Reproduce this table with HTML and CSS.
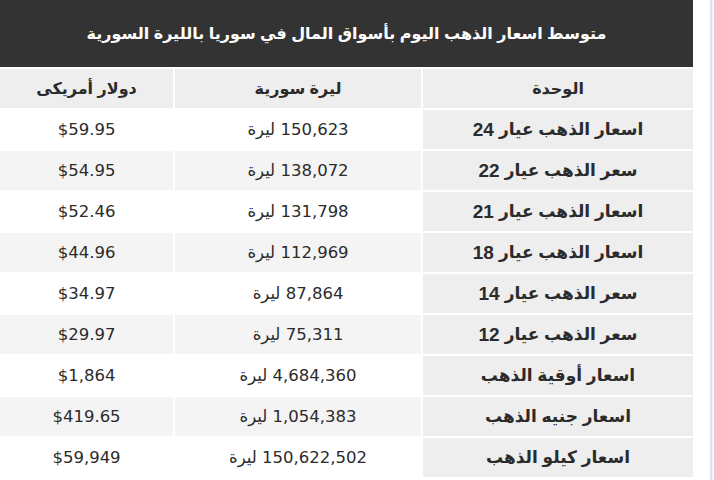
FILE: index.html
```html
<!DOCTYPE html>
<html lang="ar" dir="rtl">
<head>
<meta charset="utf-8">
<title>أسعار الذهب في سوريا</title>
<link rel="stylesheet" href="styles.css">
</head>
<body>
<div class="page">
  <div class="edge"></div>
  <div class="main">
    <div class="title">متوسط اسعار الذهب اليوم بأسواق المال في سوريا بالليرة السورية</div>
    <div class="grid">
      <div class="cell head">الوحدة</div>
      <div class="cell head">ليرة سورية</div>
      <div class="cell head">دولار أمريكى</div>

      <div class="cell unit">اسعار الذهب عيار <b>24</b></div>
      <div class="cell num">150,623 ليرة</div>
      <div class="cell num">$59.95</div>

      <div class="cell unit">سعر الذهب عيار <b>22</b></div>
      <div class="cell num alt">138,072 ليرة</div>
      <div class="cell num alt">$54.95</div>

      <div class="cell unit">اسعار الذهب عيار <b>21</b></div>
      <div class="cell num">131,798 ليرة</div>
      <div class="cell num">$52.46</div>

      <div class="cell unit">اسعار الذهب عيار <b>18</b></div>
      <div class="cell num alt">112,969 ليرة</div>
      <div class="cell num alt">$44.96</div>

      <div class="cell unit">سعر الذهب عيار <b>14</b></div>
      <div class="cell num">87,864 ليرة</div>
      <div class="cell num">$34.97</div>

      <div class="cell unit">سعر الذهب عيار <b>12</b></div>
      <div class="cell num alt">75,311 ليرة</div>
      <div class="cell num alt">$29.97</div>

      <div class="cell unit">اسعار أوقية الذهب</div>
      <div class="cell num">4,684,360 ليرة</div>
      <div class="cell num">$1,864</div>

      <div class="cell unit">اسعار جنيه الذهب</div>
      <div class="cell num alt">1,054,383 ليرة</div>
      <div class="cell num alt">$419.65</div>

      <div class="cell unit">اسعار كيلو الذهب</div>
      <div class="cell num">150,622,502 ليرة</div>
      <div class="cell num">$59,949</div>
    </div>
  </div>
</div>
</body>
</html>
```
FILE: styles.css
```css
html, body {
  margin: 0;
  padding: 0;
  background: #ffffff;
}
body {
  font-family: "Liberation Sans", "DejaVu Sans", sans-serif;
  color: #2b2b2b;
  overflow: hidden;
}
.page {
  display: flex;
  flex-direction: row;
  width: 714px;
  height: 480px;
}
.edge {
  width: 21px;
  flex: none;
  display: flex;
  justify-content: flex-start;
}
.edge::before {
  content: "";
  display: block;
  width: 2px;
  height: 100%;
  background: #f2f6fb;
}
.edge::after {
  content: "";
  display: block;
  width: 2px;
  height: 100%;
  background: #dbe4f0;
}
.main {
  width: 693px;
  flex: none;
}
.title {
  height: 67px;
  background: #333333;
  color: #ffffff;
  font-weight: bold;
  font-size: 16px;
  display: flex;
  align-items: center;
  justify-content: center;
  padding-bottom: 1px;
  box-sizing: border-box;
}
.grid {
  margin-top: 2px;
  display: grid;
  grid-template-columns: 270px 246px 173px;
  grid-auto-rows: 39px;
  gap: 2px;
}
.cell {
  display: flex;
  align-items: center;
  justify-content: center;
  background: #ffffff;
  white-space: nowrap;
}
.cell.head {
  background: #eeeeee;
  font-weight: bold;
  font-size: 16px;
}
.cell.unit {
  background: #eeeeee;
  font-weight: bold;
  font-size: 17px;
}
.cell.unit b {
  font-size: 19px;
  margin-right: 5px;
}
.cell.num {
  font-family: "DejaVu Sans", sans-serif;
  font-size: 16.5px;
}
.cell.alt {
  background: #f4f4f4;
}
```
